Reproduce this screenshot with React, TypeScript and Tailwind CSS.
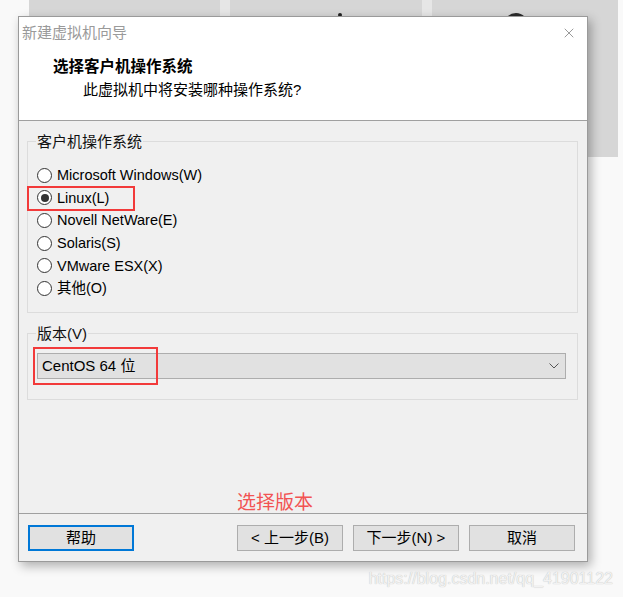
import { X } from "lucide-react";

const font = "font-['Liberation_Sans','Noto_Sans_CJK_SC',sans-serif]";

const osList = [
  { label: "Microsoft Windows(W)", checked: false },
  { label: "Linux(L)", checked: true },
  { label: "Novell NetWare(E)", checked: false },
  { label: "Solaris(S)", checked: false },
  { label: "VMware ESX(X)", checked: false },
  { label: "其他(O)", checked: false },
];

function Radio({ checked }: { checked: boolean }) {
  return (
    <span className="w-[15px] h-[15px] rounded-full border border-[#333] bg-white flex items-center justify-center shrink-0">
      {checked && <span className="w-[8px] h-[8px] rounded-full bg-[#333]" />}
    </span>
  );
}

function Button({ children, focused }: { children: React.ReactNode; focused?: boolean }) {
  return (
    <div
      className={`w-[106px] h-[26px] flex items-center justify-center bg-[#e1e1e1] text-[15px] text-black ${
        focused ? "border-2 border-[#0078d7]" : "border border-[#adadad]"
      }`}
    >
      {children}
    </div>
  );
}

export default function App() {
  return (
    <div className={`relative w-[623px] h-[597px] overflow-hidden bg-[#f9f9f9] ${font}`}>
      {/* Tiles behind the dialog */}
      <div className="flex h-[157px] pl-[29px]">
        <div className="w-[191px] bg-[#d6d6d6]" />
        <div className="w-[10px] bg-[#e6e6e6]" />
        <div className="relative w-[192px] bg-[#d6d6d6]">
          <span className="absolute left-[108px] top-[13px] w-[4px] h-[4px] rounded-full bg-[#222]" />
        </div>
        <div className="w-[10px] bg-[#e6e6e6]" />
        <div className="relative w-[186px] bg-[#d6d6d6]">
          <span className="absolute left-[72px] top-[13px] w-[24px] h-[24px] rounded-full bg-[#2a2a2a]" />
        </div>
      </div>

      {/* Dialog */}
      <div className="absolute left-[18px] top-[16px] w-[570px] h-[546px] border border-[#9a9a9a] bg-[#f0f0f0] shadow-[3px_4px_10px_rgba(0,0,0,0.3)] flex flex-col">
        {/* Header */}
        <div className="h-[104px] bg-white border-b border-[#a0a0a0]">
          <div className="h-[31px] flex items-center justify-between pl-[3px] pr-[10px]">
            <span className="text-[15px] text-[#9a9a9a] leading-[20px]">新建虚拟机向导</span>
            <X size={16} strokeWidth={1} className="text-[#666]" />
          </div>
          <div className="mt-[9px] pl-[34px] text-[15.5px] font-bold text-black leading-[20px]">选择客户机操作系统</div>
          <div className="mt-[3px] pl-[64px] text-[15px] text-black leading-[20px]">此虚拟机中将安装哪种操作系统?</div>
        </div>

        {/* Body */}
        <div className="flex-1 flex flex-col">
          <div className="relative mt-[20px] ml-[8px] w-[551px] h-[172px] border border-[#dcdcdc] pt-[22px]">
            <span className="absolute left-[8px] -top-[10px] px-[1px] bg-[#f0f0f0] text-[15px] leading-[20px] text-[#111]">
              客户机操作系统
            </span>
            {osList.map((os) => (
              <div key={os.label} className="h-[22.6px] flex items-center pl-[9px] gap-[5px]">
                <Radio checked={os.checked} />
                <span className="text-[14.5px] leading-[20px] text-black">{os.label}</span>
              </div>
            ))}
            <div className="absolute -left-[1px] top-[44px] w-[108px] h-[25px] border-2 border-[#f23a3a]" />
          </div>

          <div className="relative mt-[20px] ml-[8px] w-[551px] h-[67px] border border-[#dcdcdc] pt-[19px] pl-[9px]">
            <span className="absolute left-[8px] -top-[10px] px-[1px] bg-[#f0f0f0] text-[15px] leading-[20px] text-[#111]">
              版本(V)
            </span>
            <div className="w-[529px] h-[26px] bg-[#e1e1e1] border border-[#adadad] flex items-center justify-between pl-[4px] pr-[6px]">
              <span className="text-[15px] leading-[20px] text-black">CentOS 64 位</span>
              <svg width="10" height="6" viewBox="0 0 10 6" fill="none">
                <polyline points="0.5,0.5 5,5 9.5,0.5" stroke="#555" strokeWidth="1" />
              </svg>
            </div>
            <div className="absolute left-[5px] top-[13px] w-[125px] h-[38px] border-2 border-[#f23a3a]" />
          </div>

          <div className="h-[113px] flex items-end pl-[218px]">
            <span className="text-[19px] leading-[20px] text-[#f25353]">选择版本</span>
          </div>

          <div className="border-t border-[#a0a0a0] pt-[11px] pl-[9px] pr-[12px] flex">
            <Button focused>帮助</Button>
            <div className="flex-1" />
            <div className="flex gap-[10px]">
              <Button>&lt; 上一步(B)</Button>
              <Button>下一步(N) &gt;</Button>
              <Button>取消</Button>
            </div>
          </div>
        </div>
      </div>

      {/* Watermark */}
      <span className="absolute right-[10px] top-[569px] text-[16px] leading-[20px] text-[#f2f2f2] [text-shadow:0_0_1px_#b0b0b0]">
        https://blog.csdn.net/qq_41901122
      </span>
    </div>
  );
}
